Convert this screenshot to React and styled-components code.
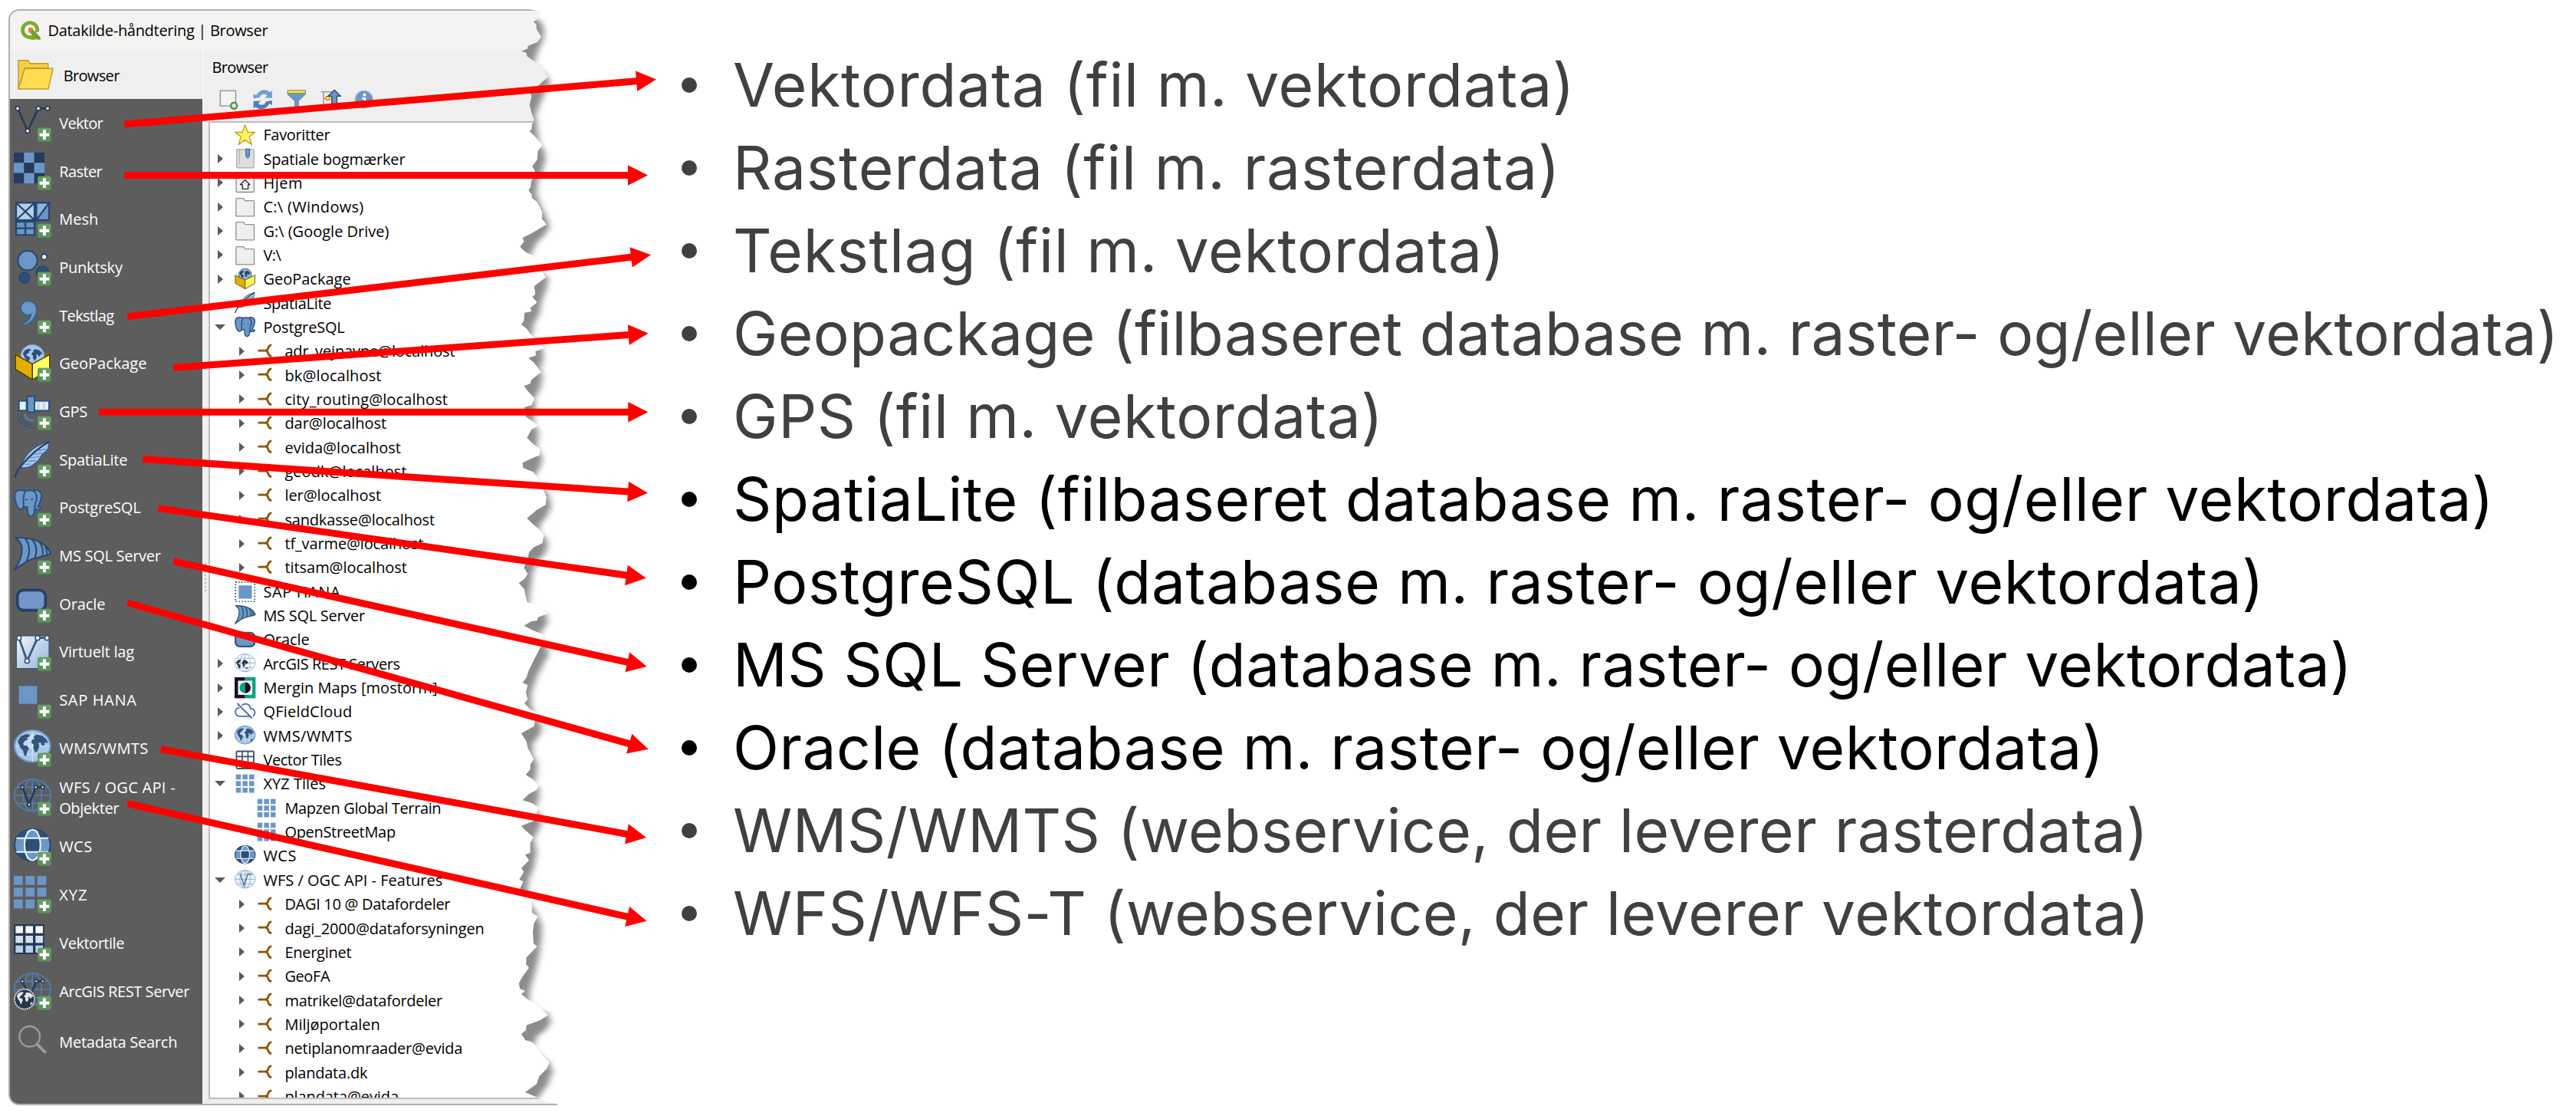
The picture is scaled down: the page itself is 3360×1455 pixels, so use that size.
import styled, { createGlobalStyle, css } from "styled-components"

const GlobalStyle = createGlobalStyle`
    * {
        box-sizing: border-box;
    }
    body {
        margin: 0;
        background-color: #fff;
    }
`

const colors = {
    dark: '#26405f',
    mid: '#33608f',
    blue: '#6b97c7',
    light: '#b5d0ea',
    red: '#ff0000',
}

/* ---------- slide ---------- */

const Slide = styled.main`
    position: relative;
    display: flex;
    width: 3360px;
    height: 1455px;
    overflow: hidden;
    background-color: #fff;
`

const Window = styled.section`
    display: flex;
    flex-direction: column;
    width: 716px;
    height: 1429px;
    margin: 12px 0 0 11px;
    border: 2px solid #b0b0b0;
    border-right: none;
    border-radius: 14px 0 0 14px;
    overflow: hidden;
    background-color: #efefef;
    font-family: 'Open Sans', 'Noto Sans', sans-serif;
    font-size: 20px;
    color: #000;
    flex-shrink: 0;
`

const TitleBar = styled.header`
    display: flex;
    align-items: center;
    gap: 10px;
    height: 51px;
    padding-left: 14px;
    background-color: #f4f3f2;
    flex-shrink: 0;
`

const Label = styled.span`
    white-space: pre;
    letter-spacing: ${({ $track }) => $track || 0}px;
`

const Columns = styled.div`
    display: flex;
    flex: 1;
    min-height: 0;
`

/* ---------- left menu ---------- */

const SideMenu = styled.nav`
    display: flex;
    flex-direction: column;
    width: 250.5px;
    flex-shrink: 0;
    background-color: #5d5d5d;
`

const MenuItem = styled.div`
    display: flex;
    align-items: center;
    gap: 10.5px;
    height: ${({ $height }) => $height || 62.7}px;
    padding-left: 5px;
    line-height: 27px;
    color: #fff;
    flex-shrink: 0;

    ${({ $active }) => $active && css`
        gap: 11px;
        height: 64px;
        padding-left: 10px;
        padding-top: 3px;
        background-color: #efefef;
        color: #000;
    `}
`

const MenuIcon = styled.svg`
    width: 48.7px;
    height: 48.7px;
    flex-shrink: 0;
    overflow: visible;
`

const MenuText = styled.div`
    display: flex;
    flex-direction: column;
`

/* ---------- browser panel ---------- */

const Splitter = styled.div`
    display: flex;
    flex-direction: column;
    align-items: center;
    justify-content: center;
    gap: 3px;
    width: 8px;
    flex-shrink: 0;
    border-left: 1px solid #fafafa;

    i {
        width: 2px;
        height: 2px;
        background-color: #b4b4b4;
    }
`

const Panel = styled.div`
    display: flex;
    flex-direction: column;
    flex: 1;
    min-width: 0;
    padding-bottom: 6px;
`

const PanelTitle = styled.div`
    height: 40px;
    padding: 9px 0 0 5px;
    line-height: 28px;
`

const Toolbar = styled.div`
    display: flex;
    align-items: center;
    gap: 18.5px;
    height: 53px;
    padding: 0 0 3px 14px;
`

const ToolIcon = styled.svg`
    width: 25.5px;
    height: 25.5px;
    overflow: visible;
`

const Tree = styled.div`
    flex: 1;
    min-height: 0;
    overflow: hidden;
    border: 2px solid #bdbdbd;
    border-right: none;
    background-color: #fff;
`

const TreeRow = styled.div`
    display: flex;
    align-items: center;
    height: 31.35px;
    padding-left: ${({ $level }) => 5.5 + $level * 28}px;
`

const Chevron = styled.span`
    display: flex;
    justify-content: center;
    width: 16px;
    margin-right: 10.5px;

    &::before {
        content: "";
        ${({ $state }) => $state === 'closed' && css`
            border-left: 7px solid #5b5b5b;
            border-top: 6.5px solid transparent;
            border-bottom: 6.5px solid transparent;
        `}
        ${({ $state }) => $state === 'open' && css`
            border-top: 7px solid #5b5b5b;
            border-left: 7px solid transparent;
            border-right: 7px solid transparent;
        `}
    }
`

const TreeIcon = styled.svg`
    width: 27.4px;
    height: 27.4px;
    margin-right: 10.5px;
    flex-shrink: 0;
    overflow: visible;
`

/* ---------- notes ---------- */

const Notes = styled.ul`
    display: flex;
    flex-direction: column;
    margin: 0;
    padding: 57px 0 0 162px;
    list-style: none;
    font-family: Inter, 'Liberation Sans', sans-serif;
    font-size: 78.4px;
    line-height: 108px;
`

const Note = styled.li`
    display: flex;
    align-items: center;
    height: 108px;
    white-space: pre;
    letter-spacing: ${({ $track }) => $track}px;
    color: ${({ $strong }) => ($strong ? '#000' : '#40403e')};

    &::before {
        content: "";
        width: 20px;
        height: 20px;
        margin-right: 47px;
        border-radius: 50%;
        background-color: currentColor;
    }
`

const TornEdge = styled.svg`
    position: absolute;
    top: 0;
    left: 430px;
    width: 310px;
    height: 1455px;
`

const ArrowLayer = styled.svg`
    position: absolute;
    top: 0;
    left: 0;
    width: 900px;
    height: 1455px;
`

/* ---------- icon drawings, all on a 146 x 146 grid ---------- */

const Plus = () => (
    <g>
        <rect x="93" y="92" width="53" height="54" rx="7" fill="#5b925b" />
        <rect x="93" y="92" width="53" height="27" rx="7" fill="#74a874" opacity=".5" />
        <path d="M119.500 100v38M100.500 119h38" stroke="#fff" strokeWidth="12" />
    </g>
)

const Continents = ({ fill = '#26405f' }) => (
    <g fill={fill}>
        <path d="M18 40l10-14 20-8 16 2-4 10-10 2 6 8-12 4-8 12 4 6 12 2 8 12-8 12-4 18-8-6-4-18-12-12-2-10-6-8z" />
        <path d="M76 30l12-10 22 4 18 14 6 16-12-4-4 14-8-2-6-12-8 4 4 12-8 20-8 4-8-18 2-12-10-8 4-12 10-2z" />
        <path d="M112 96l12-6 4 6-8 12-8 2z" />
    </g>
)

const Globe = () => (
    <g>
        <ellipse cx="73" cy="65" rx="70" ry="62" fill="#a9c7e8" stroke={colors.blue} strokeWidth="6" />
        <ellipse cx="60" cy="48" rx="40" ry="30" fill="#c6dcf2" />
        <path d="M6 66h134M73 6v120M16 34h114M16 98h114" stroke="#d5e5f5" strokeWidth="3" />
        <Continents fill="#33547c" />
    </g>
)

const Graticule = ({ fill = 'none', stroke = '#4d80b8' }) => (
    <g fill={fill} stroke={stroke} strokeWidth="5">
        <ellipse cx="73" cy="65" rx="71" ry="62" />
        <ellipse cx="73" cy="65" rx="36" ry="62" fill="none" />
        <path d="M2 66h142M73 4v124M14 34h118M14 98h118" fill="none" />
    </g>
)

const Nodes = ({ pts, line = '#263b54', r = 8 }) => (
    <g>
        <polyline points={pts.map(p => p.join()).join(' ')} fill="none" stroke={line} strokeWidth="8" />
        {pts.map(([x, y]) => <circle key={x} cx={x} cy={y} r={r} fill="#fff" stroke={line} strokeWidth="5" />)}
    </g>
)

const Elephant = () => (
    <g fill={colors.blue} stroke="#2a527f" strokeWidth="6" strokeLinejoin="round">
        <path d="M26 3C8 3 2 14 4 32c2 20 10 42 20 46 8 3 12-6 16-12l8-58C42 4 34 3 26 3z" />
        <path d="M78 4c18-4 32 6 30 24-2 16-8 30-14 40l14 4c-4 8-14 10-22 6L74 60z" />
        <path d="M46 8c10-6 30-6 38 4 8 12 6 30 0 44-2 8-2 20-4 32-2 14-10 20-18 16-8-3-8-14-8-24l-2-12c-8 4-14 0-14-8 0-18-4-38 8-52z" />
        <path d="M66 40c4-3 8-2 10 1M44 42c3-3 6-3 9 0" fill="none" strokeWidth="4" />
    </g>
)

const cells = [0, 1, 2].flatMap(r => [0, 1, 2].map(c => [c, r]))

const drawings = {
    vektor: <Nodes pts={[[15, 16], [54, 104], [96, 16], [132, 16]]} />,
    raster: cells.map(([c, r]) => (
        <rect key={c + '-' + r} x={c * 40} y={r * 40} width="40" height="40" fill={(c + r) % 2 ? colors.blue : '#233b5e'} />
    )),
    mesh: (
        <g stroke="#26476e" strokeWidth="7" fill={colors.blue}>
            <rect x="9" y="10" width="72" height="68" fill={colors.light} />
            <path d="M9 10l72 68M81 10L9 78" />
            <rect x="88" y="10" width="50" height="68" />
            <path d="M138 10L88 78V10z" fill="#8fb4dc" />
            <path d="M9 84h72v52H9zM45 84v52M9 110h72" />
        </g>
    ),
    punktsky: (
        <g stroke="#26476e" strokeWidth="6">
            <circle cx="54" cy="47" r="38" fill={colors.blue} />
            <circle cx="42" cy="114" r="20" fill="#2b4f7a" />
            <circle cx="112" cy="94" r="24" fill="#2b4f7a" />
            <circle cx="119" cy="33" r="11" fill="#eef4fb" />
        </g>
    ),
    tekstlag: (
        <path d="M56 16c20 0 34 14 33 36-1 30-22 54-50 60l-2-7c18-8 28-20 30-36-18 8-40-4-40-26 0-16 13-27 29-27z" fill={colors.blue} stroke="#33608f" strokeWidth="5" />
    ),
    geopackage: (
        <g>
            <path d="M6 38l67-22 67 22-67 36z" fill="#8a6a00" />
            <circle cx="73" cy="47" r="46" fill="#a9c7e8" stroke={colors.blue} strokeWidth="4" />
            <g transform="translate(26 6) scale(.64)"><Continents fill="#2b4f7a" /></g>
            <g stroke="#4c3b00" strokeWidth="4" strokeLinejoin="round">
                <path d="M6 40l67 36v62L7 98z" fill="#dfb000" />
                <path d="M140 40L73 76v62l67-40z" fill="#ffff5e" />
            </g>
        </g>
    ),
    gps: (
        <g stroke="#26527f" strokeWidth="6">
            <rect x="20" y="32" width="30" height="38" fill="#e8eef6" />
            <rect x="74" y="32" width="64" height="38" fill="#e4ecf6" />
            <path d="M96 35v32M118 35v32" stroke="#bdd5ee" strokeWidth="9" />
            <rect x="53" y="14" width="28" height="62" fill={colors.blue} />
            <path d="M44 82c0 14 10 26 34 28" fill="none" stroke="#5d8cbf" strokeWidth="5" />
            <path d="M30 82c0 24 16 40 46 44M16 82c0 30 22 52 62 58" fill="none" stroke="#34557f" strokeWidth="5" />
        </g>
    ),
    spatialite: (
        <g>
            <path d="M139 2C92 12 50 42 34 84L20 106l34-2c30-10 50-34 56-50l22-18c4-12 6-22 7-34z" fill="#a9c9ea" stroke="#33608f" strokeWidth="5" strokeLinejoin="round" />
            <path d="M44 92l22-2M52 80l34-4M64 66l38-6M78 52l38-6M94 38l34-6" stroke="#6b97c7" strokeWidth="5" />
            <path d="M139 2C100 24 60 58 30 96 16 112 8 126 3 144" fill="none" stroke="#26405f" strokeWidth="7" />
        </g>
    ),
    postgres: <Elephant />,
    postgresSmall: <g transform="scale(1.300)"><Elephant /></g>,
    mssql: (
        <g fill={colors.blue} stroke="#26476e" strokeWidth="6" strokeLinejoin="round">
            <path d="M6 3c38 0 72 4 98 18 22 12 34 26 40 45-28 12-56 14-84 26-20 9-40 24-58 38 18-26 30-54 30-82 0-18-10-34-26-45z" />
            <path d="M44 6c20 24 20 58 4 94M72 10c18 22 20 48 10 74M100 20c14 18 16 34 12 54M122 34c6 12 8 20 8 36" fill="none" />
        </g>
    ),
    oracle: <rect x="14" y="19" width="110" height="79" rx="24" fill="#7596c8" stroke="#26406a" strokeWidth="11" />,
    virtuelt: (
        <g>
            <rect x="10" y="9" width="128" height="128" fill="url(#paper)" stroke="#26476e" strokeWidth="3" />
            <Nodes pts={[[20, 17], [52, 107], [93, 17], [130, 17]]} line="#34557f" r={9} />
        </g>
    ),
    saphana: (
        <g>
            <rect x="20" y="19" width="71" height="70" fill={colors.blue} />
            <rect x="3" y="3" width="105" height="104" fill="none" stroke="#35608f" strokeWidth="6" strokeDasharray="7 13.500" />
        </g>
    ),
    wms: <Globe />,
    wfs: (
        <g>
            <Graticule />
            <Nodes pts={[[34, 34], [60, 102], [86, 34], [113, 34]]} r={6} />
        </g>
    ),
    wcs: (
        <g>
            <ellipse cx="73" cy="65" rx="70" ry="62" fill={colors.blue} stroke="#26476e" strokeWidth="6" />
            <path d="M50 6C34 12 22 22 14 36h34zM96 6c16 6 28 16 36 30H98zM50 124c-16-6-28-16-36-30h34zM96 124c16-6 28-16 36-30H98z" fill="#2b4f7a" />
            <path d="M43 38h60v54H43z" fill="#2b4f7a" />
            <g fill="none" stroke="#eef4fb" strokeWidth="6">
                <ellipse cx="73" cy="65" rx="31" ry="60" />
                <path d="M10 38h126M10 92h126" />
            </g>
        </g>
    ),
    xyz: cells.map(([c, r]) => <rect key={c + '-' + r} x={c * 46} y={r * 46} width="35" height="35" fill={colors.blue} />),
    vektortile: (
        <g>
            <rect width="119" height="117" fill="#26384f" />
            {cells.map(([c, r]) => (
                <rect key={c + '-' + r} x={7 + c * 39} y={7 + r * 38} width="29" height="28" fill={['#f4f6f9', '#d2e0ef', '#b5d0ea'][r]} />
            ))}
        </g>
    ),
    arcgis: (
        <g>
            <Graticule />
            <Nodes pts={[[34, 34], [60, 100], [88, 34], [113, 34]]} r={6} />
            <circle cx="42" cy="104" r="39" fill="#26384f" stroke="#dcdcdc" strokeWidth="5" strokeDasharray="7 2" />
            <g transform="translate(3 66) scale(.55)"><Continents fill="#e6e6e6" /></g>
        </g>
    ),
    search: (
        <g fill="none" stroke="#9b9b9b">
            <circle cx="62" cy="52" r="40" strokeWidth="7" />
            <path d="M91 82l34 34" strokeWidth="12" />
        </g>
    ),
    openFolder: (
        <g fill="#ffdc50" stroke="#c39a2b" strokeWidth="4.500" strokeLinejoin="round">
            <path d="M3 126V14h38l6 12h72v18H28z" fill="#f5cf45" />
            <path d="M3 126L28 46h110l-18 80z" />
        </g>
    ),

    star: (
        <path d="M73 4l19 52h50l-40 31 17 55-46-34-46 34 17-55L4 56h50z" fill="#fff36b" stroke="#c79f14" strokeWidth="7" strokeLinejoin="round" />
    ),
    bookmark: (
        <g>
            <path d="M14 10h112q8 0 8 8v112q0 8-8 8H26q-12 0-12-12z" fill="#dedede" stroke="#a5a5a5" strokeWidth="6" />
            <path d="M34 10v100" stroke="#b4b4b4" strokeWidth="7" />
            <path d="M78 6h26v50l-13 16-13-16z" fill={colors.blue} stroke="#33608f" strokeWidth="5" />
        </g>
    ),
    home: (
        <g fill="#f1f1f1" stroke="#8f8f8b" strokeWidth="7">
            <rect x="11" y="8" width="124" height="128" rx="6" />
            <path d="M40 84l33-34 33 34H94v30H54V84z" stroke="#2f2f2f" strokeLinejoin="round" />
        </g>
    ),
    folder: (
        <path d="M10 134V20q0-6 6-6h44l14 16h56q6 0 6 6v98q0 4-4 4H14q-4 0-4-4z" fill="#efefef" stroke="#8f8f8b" strokeWidth="7" />
    ),
    mergin: (
        <g>
            <path d="M0 0h73v146H0z" fill="#200d24" />
            <path d="M73 0h73v146H73z" fill="#00a882" />
            <path d="M24 24h98v98H24z" fill="#fff" />
            <path d="M73 34a39 39 0 0 0 0 78z" fill="#00a882" />
            <path d="M73 34a39 39 0 0 1 0 78z" fill="#200d24" />
        </g>
    ),
    cloud: (
        <g fill="none" stroke="#4a6fae" strokeWidth="10">
            <path d="M34 46C14 48 4 62 6 78c2 18 14 28 30 28h68M50 30C76 8 108 24 110 52c24 2 34 18 30 36-2 8-6 12-12 16M18 16l104 104" />
        </g>
    ),
    grid: (
        <g>
            <rect x="13" y="13" width="120" height="120" rx="8" fill="#fff" stroke="#42546a" strokeWidth="10" />
            <path d="M53 13v120M93 13v120M13 50h120M13 92h120" stroke="#42546a" strokeWidth="9" />
        </g>
    ),
    tiles: cells.map(([c, r]) => <rect key={c + '-' + r} x={9 + c * 46} y={9 + r * 46} width="35" height="35" fill="#6b97c7" />),
    chip: (
        <g>
            <rect x="28" y="28" width="92" height="92" fill={colors.blue} />
            <rect x="6" y="6" width="134" height="134" fill="none" stroke="#33557f" strokeWidth="9" strokeDasharray="9 11.600" />
        </g>
    ),
    oracleSmall: <rect x="6" y="26" width="134" height="96" rx="30" fill="#6b97c7" stroke="#34557f" strokeWidth="12" />,
    arcgisSmall: (
        <g>
            <Graticule fill="#fff" stroke="#8fb2da" />
            <g transform="translate(0 30) scale(.72)"><Continents fill="#2d3845" /></g>
        </g>
    ),
    wfsSmall: (
        <g>
            <Graticule fill="#eaf2fb" stroke="#8fb2da" />
            <Nodes pts={[[40, 30], [66, 108], [92, 30], [112, 30]]} r={6} line="#5a6b80" />
        </g>
    ),
    geopackageSmall: (
        <g>
            <circle cx="73" cy="44" r="44" fill="#8db2dc" stroke="#34557f" strokeWidth="5" />
            <g transform="translate(26 4) scale(.62)"><Continents fill="#26405f" /></g>
            <g stroke="#6b5200" strokeWidth="5" strokeLinejoin="round">
                <path d="M4 46l69 34v62L6 104z" fill="#dfb000" />
                <path d="M142 46L73 80v62l67-38z" fill="#fff45e" />
            </g>
        </g>
    ),
    link: (
        <path d="M14 73h50M108 34c-12 0-18 4-22 16-4 14-10 23-22 23 12 0 18 9 22 23 4 12 10 16 22 16" fill="none" stroke="#915500" strokeWidth="15" transform="translate(0 -3)" />
    ),
}

const sideItems = [
    { icon: 'vektor', text: 'Vektor', track: -.7 },
    { icon: 'raster', text: 'Raster', track: -.6 },
    { icon: 'mesh', text: 'Mesh', track: 0 },
    { icon: 'punktsky', text: 'Punktsky', track: -.22 },
    { icon: 'tekstlag', text: 'Tekstlag', track: -.65 },
    { icon: 'geopackage', text: 'GeoPackage', track: 0 },
    { icon: 'gps', text: 'GPS', track: -.29 },
    { icon: 'spatialite', text: 'SpatiaLite', track: -.25 },
    { icon: 'postgres', text: 'PostgreSQL', track: -.17 },
    { icon: 'mssql', text: 'MS SQL Server', track: -.28 },
    { icon: 'oracle', text: 'Oracle', track: -.09 },
    { icon: 'virtuelt', text: 'Virtuelt lag', track: -.21 },
    { icon: 'saphana', text: 'SAP HANA', track: .67 },
    { icon: 'wms', text: 'WMS/WMTS', track: .4 },
    { icon: 'wfs', text: 'WFS / OGC API -', track: .3, second: 'Objekter', height: 66 },
    { icon: 'wcs', text: 'WCS', track: .47 },
    { icon: 'xyz', text: 'XYZ', track: 1.1 },
    { icon: 'vektortile', text: 'Vektortile', track: -.47 },
    { icon: 'arcgis', text: 'ArcGIS REST Server', track: -.41 },
    { icon: 'search', text: 'Metadata Search', track: -.24, height: 70, noPlus: true },
]

// [icon, text, letter spacing, level, chevron]
const treeItems = [
    ['star', 'Favoritter', -.35, 0],
    ['bookmark', 'Spatiale bogmærker', -.17, 0, 'closed'],
    ['home', 'Hjem', .5, 0, 'closed'],
    ['folder', 'C:\\ (Windows)', .3, 0, 'closed'],
    ['folder', 'G:\\ (Google Drive)', 0, 0, 'closed'],
    ['folder', 'V:\\', -.59, 0, 'closed'],
    ['geopackageSmall', 'GeoPackage', 0, 0, 'closed'],
    ['spatialite', 'SpatiaLite', -.25, 0],
    ['postgresSmall', 'PostgreSQL', -.17, 0, 'open'],
    ['link', 'adr_vejnavne@localhost', -.14, 1, 'closed'],
    ['link', 'bk@localhost', .15, 1, 'closed'],
    ['link', 'city_routing@localhost', .12, 1, 'closed'],
    ['link', 'dar@localhost', -.05, 1, 'closed'],
    ['link', 'evida@localhost', .02, 1, 'closed'],
    ['link', 'geodk@localhost', .04, 1, 'closed'],
    ['link', 'ler@localhost', -.04, 1, 'closed'],
    ['link', 'sandkasse@localhost', -.17, 1, 'closed'],
    ['link', 'tf_varme@localhost', -.13, 1, 'closed'],
    ['link', 'titsam@localhost', -.04, 1, 'closed'],
    ['chip', 'SAP HANA', .6, 0],
    ['mssql', 'MS SQL Server', -.28, 0],
    ['oracleSmall', 'Oracle', -.09, 0],
    ['arcgisSmall', 'ArcGIS REST Servers', -.45, 0, 'closed'],
    ['mergin', 'Mergin Maps [mostorm]', .06, 0, 'closed'],
    ['cloud', 'QFieldCloud', .21, 0, 'closed'],
    ['wms', 'WMS/WMTS', .4, 0, 'closed'],
    ['grid', 'Vector Tiles', -.42, 0],
    ['tiles', 'XYZ Tiles', .04, 0, 'open'],
    ['tiles', 'Mapzen Global Terrain', -.37, 1],
    ['tiles', 'OpenStreetMap', -.31, 1],
    ['wcs', 'WCS', .47, 0],
    ['wfsSmall', 'WFS / OGC API - Features', .02, 0, 'open'],
    ['link', 'DAGI 10 @ Datafordeler', -.3, 1, 'closed'],
    ['link', 'dagi_2000@dataforsyningen', -.14, 1, 'closed'],
    ['link', 'Energinet', -.27, 1, 'closed'],
    ['link', 'GeoFA', -.41, 1, 'closed'],
    ['link', 'matrikel@datafordeler', -.27, 1, 'closed'],
    ['link', 'Miljøportalen', 0, 1, 'closed'],
    ['link', 'netiplanomraader@evida', -.21, 1, 'closed'],
    ['link', 'plandata.dk', -.22, 1, 'closed'],
    ['link', 'plandata@evida', -.09, 1, 'closed'],
]

const notes = [
    { text: 'Vektordata (fil m. vektordata)', track: .75 },
    { text: 'Rasterdata (fil m. rasterdata)', track: .86 },
    { text: 'Tekstlag (fil m. vektordata)', track: .74 },
    { text: 'Geopackage (filbaseret database m. raster- og/eller vektordata)', track: .31 },
    { text: 'GPS (fil m. vektordata)', track: .64 },
    { text: 'SpatiaLite (filbaseret database m. raster- og/eller vektordata)', track: .62, strong: true },
    { text: 'PostgreSQL (database m. raster- og/eller vektordata)', track: .67, strong: true },
    { text: 'MS SQL Server (database m. raster- og/eller vektordata)', track: .45, strong: true },
    { text: 'Oracle (database m. raster- og/eller vektordata)', track: .47, strong: true },
    { text: 'WMS/WMTS (webservice, der leverer rasterdata)', track: .47 },
    { text: 'WFS/WFS-T (webservice, der leverer vektordata)', track: .52 },
]

// start x, start y, tip x, tip y
const arrows = [
    [162.3, 162, 856, 103.6],
    [162.3, 228.5, 845, 228.5],
    [166.3, 412.7, 849, 332.3],
    [226.3, 479.3, 845.7, 434.6],
    [129.3, 537.3, 845.3, 537.3],
    [186.3, 598.6, 845, 642.7],
    [206.3, 662.6, 842.7, 753.7],
    [226.3, 731.8, 843.7, 869],
    [166.3, 786, 845.7, 976.7],
    [210, 976.7, 843, 1092],
    [166.3, 1047.7, 843.5, 1200.8],
]

const Arrow = ({ from: [x1, y1], to: [x2, y2] }) => {
    const length = Math.hypot(x2 - x1, y2 - y1)
    const angle = (Math.atan2(y2 - y1, x2 - x1) * 180) / Math.PI
    return (
        <path
            transform={`translate(${x1} ${y1}) rotate(${angle})`}
            d={`M0-4.500H${length - 26}V-13.300L${length} 0L${length - 26} 13.300V4.500H0z`}
            fill={colors.red}
        />
    )
}

// right side of the window: ragged paper edge and the soft shade behind it
const edge = [
    [780, 36], [825, 45], [815, 75], [797, 85], [808, 95], [810, 115], [828, 145], [812, 165], [775, 180], [775, 190], [750, 200], [770, 207], [772, 220], [800, 240], [828, 252], [838, 275], [855, 300], [835, 318], [812, 338], [785, 360], [790, 378], [782, 410], [790, 440], [800, 470], [792, 485], [790, 505], [782, 513], [800, 530], [832, 568], [815, 590], [812, 625], [793, 650], [803, 670], [800, 690], [788, 710], [787, 730], [778, 745], [790, 760], [792, 775], [812, 790], [832, 830], [830, 855], [848, 878], [820, 895], [795, 910], [755, 930], [760, 945], [745, 965], [765, 985], [795, 1000], [810, 1022], [825, 1045],
    [845, 1085], [800, 1120], [805, 1150], [793, 1162], [812, 1182], [785, 1205], [790, 1218], [762, 1223], [760, 1255], [750, 1270], [770, 1285], [785, 1305], [800, 1320], [838, 1362], [805, 1375], [808, 1390], [778, 1400], [800, 1420], [828, 1455], [790, 1485], [785, 1500], [760, 1510], [780, 1535], [802, 1558], [790, 1585], [762, 1593], [767, 1630], [790, 1645], [815, 1665], [790, 1680], [772, 1712], [800, 1740], [822, 1755], [822, 1780], [780, 1798], [755, 1810], [757, 1830], [795, 1845], [815, 1868], [838, 1920], [848, 1945], [845, 1975], [810, 1995], [772, 2027], [795, 2050], [820, 2070], [838, 2095], [832, 2125], [800, 2140],
    [780, 2160], [775, 2185], [760, 2220], [775, 2245], [762, 2265], [740, 2280], [762, 2305], [772, 2355], [808, 2363], [850, 2400], [815, 2415], [812, 2427], [790, 2430], [760, 2447], [795, 2465], [835, 2482], [838, 2510], [820, 2540], [800, 2580], [780, 2620], [770, 2650], [755, 2670], [775, 2680], [768, 2710], [775, 2735], [762, 2750], [785, 2775], [815, 2790], [803, 2820], [800, 2840], [750, 2868], [770, 2900], [775, 2925], [798, 2970], [785, 2990], [785, 3010], [767, 3030], [790, 3045], [818, 3070], [810, 3090], [780, 3105], [755, 3130], [790, 3140], [818, 3160], [800, 3210], [750, 3230],
    [760, 3242], [798, 3275], [785, 3295], [785, 3335], [765, 3343], [780, 3365], [750, 3395], [760, 3410], [742, 3440], [758, 3448], [745, 3475], [770, 3505], [790, 3525], [792, 3570], [815, 3585], [800, 3610], [795, 3645], [798, 3690], [812, 3702], [770, 3745], [768, 3770], [780, 3785], [755, 3820], [740, 3845], [745, 3868], [765, 3875], [750, 3888], [775, 3910], [800, 3922], [855, 3970], [825, 3990], [770, 4010], [768, 4030], [750, 4043], [765, 4068], [790, 4075], [815, 4098], [830, 4125], [860, 4155], [850, 4180], [820, 4210], [810, 4240], [765, 4272], [825, 4298], [860, 4312], [890, 4317],
]

const shade = [
    [790, 60], [825, 72], [845, 90], [855, 120], [850, 155], [835, 190], [815, 245], [830, 265], [860, 290], [878, 320], [865, 350], [840, 400], [822, 450], [828, 500], [835, 560], [855, 590], [860, 620], [850, 660], [830, 710], [825, 760], [845, 810], [870, 865], [875, 890], [855, 920], [825, 950], [805, 990], [795, 1025], [825, 1050],
    [872, 1090], [865, 1125], [845, 1180], [835, 1230], [815, 1265], [805, 1320], [848, 1365], [852, 1400], [840, 1440], [848, 1480], [840, 1515], [818, 1560], [820, 1610], [812, 1655], [832, 1685], [830, 1720], [825, 1750], [848, 1790], [840, 1825], [815, 1868], [835, 1900], [870, 1930], [882, 1980], [865, 2020], [840, 2050], [835, 2080], [865, 2110], [868, 2140],
    [855, 2170], [830, 2190], [810, 2240], [800, 2310], [795, 2360], [825, 2385], [865, 2405], [867, 2440], [845, 2470], [835, 2490], [870, 2535], [870, 2565], [850, 2600], [825, 2650], [805, 2710], [805, 2760], [815, 2790], [845, 2840], [840, 2870], [810, 2910], [810, 2950], [828, 2990], [825, 3030], [815, 3065], [835, 3085], [835, 3120], [820, 3160], [845, 3200], [840, 3230],
    [815, 3280], [825, 3335], [815, 3390], [795, 3440], [790, 3480], [790, 3520], [825, 3570], [845, 3620], [845, 3660], [835, 3740], [820, 3800], [800, 3870], [795, 3918], [825, 3945], [872, 3965], [880, 4000], [860, 4030], [830, 4050], [812, 4090], [830, 4120], [875, 4155], [888, 4190], [870, 4240], [835, 4290], [825, 4298],
]

const toPoints = list => list.map(p => p.join()).join(' ')

const ToolbarIcons = () => (
    <Toolbar>
        <ToolIcon viewBox="0 0 76 76">
            <rect x="4" y="4" width="60" height="59" fill="#f3f3f3" stroke="#8f8f8b" strokeWidth="4" />
            <circle cx="57" cy="62" r="12" fill="#dfeedd" stroke="#5b925b" strokeWidth="8" />
        </ToolIcon>
        <ToolIcon viewBox="0 0 76 76">
            <path d="M2 34V16l10 6C26-4 54-4 66 10l8-8v30H46l10-10C44 14 30 16 26 30z" fill="#6f9fd6" />
            <path d="M74 42v18l-10-6C50 80 22 80 10 66l-8 8V44h28L20 54c12 8 26 6 30-8z" fill="#4d7fbd" />
        </ToolIcon>
        <ToolIcon viewBox="0 0 76 76">
            <path d="M3 12h70v6L46 44v32H31V44L3 18z" fill="#6b97c7" stroke="#5a83b0" strokeWidth="2" />
            <rect x="3" y="2" width="70" height="12" rx="3" fill="#f2e14c" stroke="#8b8b4a" strokeWidth="3" />
        </ToolIcon>
        <ToolIcon viewBox="0 0 76 76">
            <path d="M2 8h46M12 8v58h20M12 34h16" stroke="#8f8f8b" strokeWidth="4" fill="none" />
            <rect x="22" y="26" width="14" height="14" fill="#ffe08a" stroke="#f08000" strokeWidth="4" />
            <path d="M54 1l24 24H64v46H44V25H30z" fill="#6b97c7" stroke="#26476e" strokeWidth="4" />
        </ToolIcon>
        <ToolIcon viewBox="0 0 76 76">
            <circle cx="38" cy="38" r="34" fill="#6b97c7" stroke="#a3b6cc" strokeWidth="4" />
            <circle cx="40" cy="20" r="6" fill="#fff" />
            <path d="M30 34h12l-4 24h8" stroke="#fff" strokeWidth="7" fill="none" />
        </ToolIcon>
    </Toolbar>
)

const QgisLogo = () => (
    <ToolIcon viewBox="0 0 80 80">
        <circle cx="38" cy="38" r="30" fill="none" stroke="#7cab2b" strokeWidth="15" />
        <path d="M56 50l26-8v40H64z" fill="#f4f3f2" />
        <path d="M36 46l12-12 33 34v10H66z" fill="#6aa032" />
        <path d="M32 29h18v9l-9 11h-9z" fill="#ee7913" />
        <path d="M38 68c8 0 14-1 20-6l10 10c-8 6-18 8-30 4z" fill="#7cab2b" />
    </ToolIcon>
)

const SideItem = ({ icon, text, track, second, height, noPlus }) => (
    <MenuItem $height={height}>
        <MenuIcon viewBox="0 0 146 146">
            {drawings[icon]}
            {!noPlus && <Plus />}
        </MenuIcon>
        <MenuText>
            <Label $track={track}>{text}</Label>
            {second && <Label $track={-.42}>{second}</Label>}
        </MenuText>
    </MenuItem>
)

export default function App() {
    return (
        <Slide>
            <GlobalStyle />
            <Window>
                <TitleBar>
                    <QgisLogo />
                    <Label $track={-.3}>Datakilde-håndtering | Browser</Label>
                </TitleBar>
                <Columns>
                    <SideMenu>
                        <MenuItem $active>
                            <MenuIcon viewBox="0 0 146 146">{drawings.openFolder}</MenuIcon>
                            <Label $track={-.65}>Browser</Label>
                        </MenuItem>
                        {sideItems.map(item => <SideItem key={item.icon} {...item} />)}
                    </SideMenu>
                    <Splitter>
                        {Array.from({ length: 8 }, (_, i) => <i key={i} />)}
                    </Splitter>
                    <Panel>
                        <PanelTitle><Label $track={-.65}>Browser</Label></PanelTitle>
                        <ToolbarIcons />
                        <Tree>
                            {treeItems.map(([icon, text, track, level, state]) => (
                                <TreeRow key={text} $level={level}>
                                    <Chevron $state={state} />
                                    <TreeIcon viewBox="0 0 146 146">{drawings[icon]}</TreeIcon>
                                    <Label $track={track}>{text}</Label>
                                </TreeRow>
                            ))}
                        </Tree>
                    </Panel>
                </Columns>
            </Window>

            <Notes>
                {notes.map(({ text, track, strong }) => (
                    <Note key={text} $track={track} $strong={strong}>{text}</Note>
                ))}
            </Notes>

            <TornEdge viewBox="0 0 930 4365">
                <defs>
                    <linearGradient id="paper" x1="0" y1="0" x2="1" y2="1">
                        <stop offset="0" stopColor="#f2f5f9" />
                        <stop offset="1" stopColor="#8fb4dc" />
                    </linearGradient>
                    <filter id="soft" x="-20%" width="140%">
                        <feGaussianBlur stdDeviation="12 7" />
                    </filter>
                    <clipPath id="outside">
                        <polygon points={`930,0 780,0 ${toPoints(edge)} 930,4317`} />
                    </clipPath>
                </defs>
                <g clipPath="url(#outside)">
                    <rect width="930" height="4317" fill="#fff" />
                    <polygon points={`600,60 ${toPoints(shade)} 600,4298`} fill="#8c8c8c" filter="url(#soft)" transform="translate(-16 0)" />
                </g>
            </TornEdge>

            <ArrowLayer viewBox="0 0 900 1455">
                {arrows.map(([x1, y1, x2, y2]) => <Arrow key={y1} from={[x1, y1]} to={[x2, y2]} />)}
            </ArrowLayer>
        </Slide>
    )
}
